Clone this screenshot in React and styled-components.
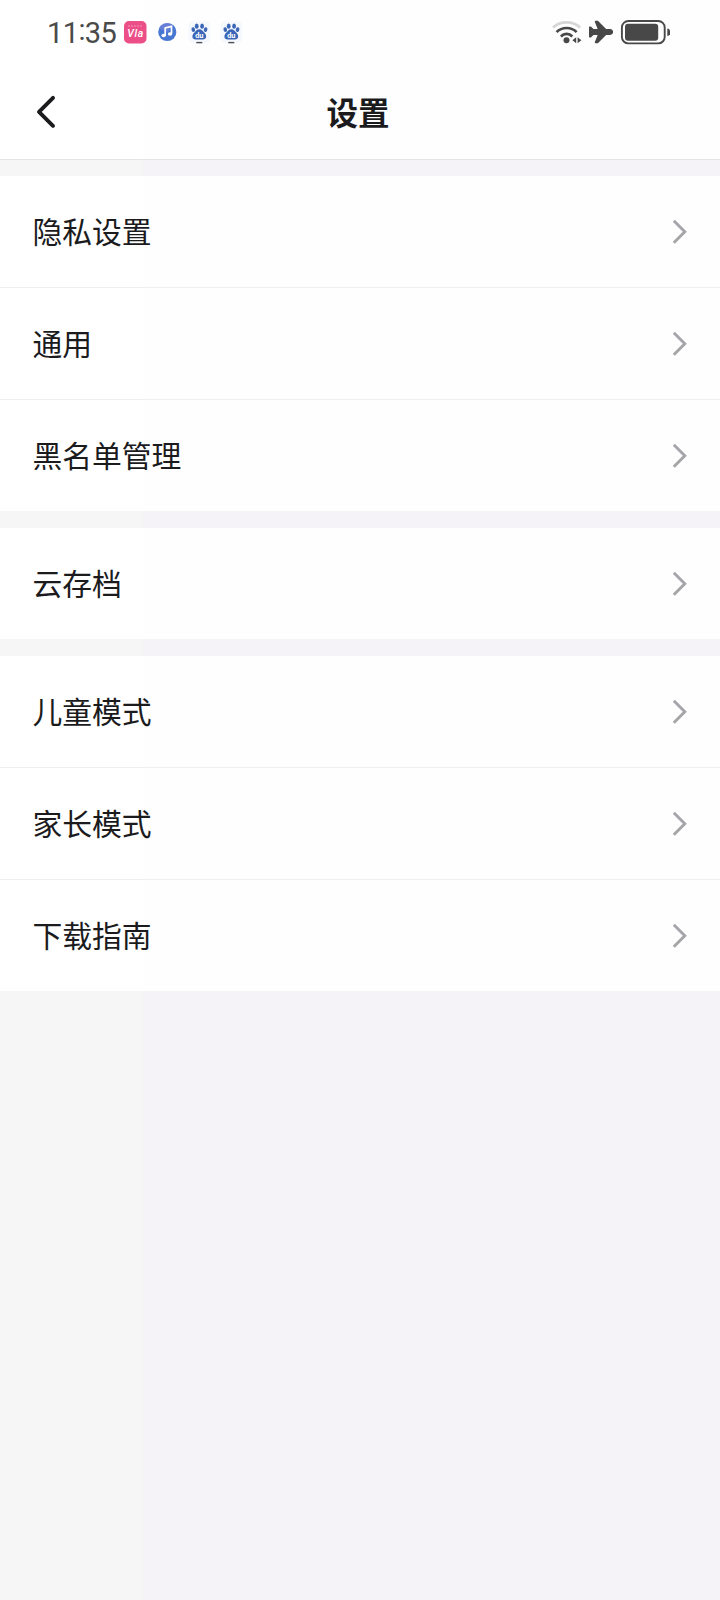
import React from 'react';
import styled, { createGlobalStyle } from 'styled-components';

const GlobalStyle = createGlobalStyle`
  * { box-sizing: border-box; }
  body {
    margin: 0;
    background: #f5f3f7;
  }
  svg { display: block; flex: none; }
`;

const surface = 'linear-gradient(90deg, #ffffff 143px, #fefefe 143px)';

const Screen = styled.div`
  width: 720px;
  height: 1600px;
  display: flex;
  flex-direction: column;
  overflow: hidden;
  background: linear-gradient(90deg, #f6f6f6 143px, #f5f3f7 143px);
  color: #1b1b1d;
  font-family: 'Noto Sans CJK SC', sans-serif;
`;

const StatusBar = styled.div`
  height: 64px;
  padding: 0 50px 0 47px;
  display: flex;
  align-items: center;
  justify-content: space-between;
  background: ${surface};
`;

const StatusGroup = styled.div`
  display: flex;
  align-items: center;
`;

const Clock = styled.div`
  width: 76px;
  padding-top: 1px;
  font: 400 29px/64px Roboto, sans-serif;
  letter-spacing: -0.6px;
  color: #4a4a4a;
`;

const Colon = styled.span`
  position: relative;
  top: -3px;
`;

const Header = styled.header`
  height: 96px;
  padding: 0 35px 0 31px;
  display: grid;
  grid-template-columns: 32px 1fr 32px;
  align-items: center;
  border-bottom: 1px solid #e4e3e6;
  background: ${surface};
`;

const BackButton = styled.button`
  border: 0;
  padding: 0;
  background: none;
`;

const Title = styled.h1`
  margin: 0;
  padding-bottom: 2px;
  font-size: 31.5px;
  line-height: 46px;
  font-weight: 700;
  text-align: center;
`;

const Sections = styled.main`
  padding-top: 16px;
  display: flex;
  flex-direction: column;
  gap: 17px;
`;

const Section = styled.section`
  background: ${surface};
`;

const Row = styled.div`
  height: 112px;
  padding: 0 32px 0 32.4px;
  display: flex;
  align-items: center;
  justify-content: space-between;
  border-bottom: 1px solid #f0eef1;

  &:last-child {
    height: 111px;
    border-bottom: 0;
  }
`;

const Label = styled.span`
  padding-bottom: 4px;
  font-size: 29.8px;
  line-height: 44px;
`;

const Chevron = () => (
  <svg width="16" height="26" viewBox="0 0 16 26" fill="none">
    <path d="M1.8 1.8 12.8 12.800 1.8 23.800" stroke="#a5a4a8" strokeWidth="2.900" />
  </svg>
);

const BackIcon = () => (
  <svg width="32" height="36" viewBox="0 0 32 36" fill="none">
    <path d="M22 3.8 8 17.8 22 31.8" stroke="#1b1b1d" strokeWidth="3.9" strokeLinecap="round" strokeLinejoin="round" />
  </svg>
);

const AppIcons = () => (
  <svg width="122" height="28" viewBox="0 0 122 28">
    <rect x="1" y="3" width="22.5" height="22.5" rx="5" fill="#ec4f87" />
    <path d="M5 8h14" stroke="#f27fa9" strokeWidth="1.6" strokeDasharray="2 1" />
    <text x="12.2" y="18.5" textAnchor="middle" fontFamily="Roboto, sans-serif" fontSize="10.5" fontStyle="italic" fontWeight="500" fill="#fff" textLength="16">Vla</text>

    <circle cx="44.3" cy="14" r="9.1" fill="#4878d2" />
    <path d="M36 10.5a9 9 0 0 1 14-3.4l-5 7z" fill="#7f83dc" opacity=".6" />
    <path d="M42.2 17.5V9.8l6.3-1.5v7.5" fill="none" stroke="#fff" strokeWidth="1.7" />
    <ellipse cx="40.7" cy="17.5" rx="2.2" ry="1.8" fill="#fff" />
    <ellipse cx="47" cy="16" rx="2.2" ry="1.8" fill="#fff" />

    {[76.3, 108.3].map((x) => (
      <g key={x} transform={`translate(${x} 0)`}>
        <rect x="-11" y="3" width="22" height="22" rx="5" fill="#f5f8fc" />
        <g fill="#3c67b9">
          <ellipse cx="-6" cy="11.6" rx="1.8" ry="2.4" transform="rotate(-12 -6 11.6)" />
          <ellipse cx="-2.6" cy="8.2" rx="1.9" ry="2.6" />
          <ellipse cx="2.8" cy="8.2" rx="1.9" ry="2.6" />
          <ellipse cx="6.3" cy="11.6" rx="1.8" ry="2.4" transform="rotate(12 6.3 11.6)" />
          <path d="M0 11.3c2.600 0 3.200 1.800 4.900 3.200 2.900 2.500 2.700 7-1.300 7h-7.200c-4 0-4.200-4.500-1.300-7C-3.200 13.100-2.600 11.300 0 11.300z" />
        </g>
        <text x="0" y="20.2" textAnchor="middle" fontFamily="Roboto, sans-serif" fontSize="7.4" fontWeight="700" fill="#fff">du</text>
        <path d="M-3 24.6h6" stroke="#4c4d56" strokeWidth="1.4" />
      </g>
    ))}
  </svg>
);

const SystemIcons = () => (
  <svg width="120" height="30" viewBox="0 0 120 30" fill="none">
    <path d="M3 10.7C9.7 3.6 23.3 3.6 30.2 10.7" stroke="#d6d6d6" strokeWidth="2.6" />
    <path d="M6.6 15.1c5.3-5.5 14.7-5.5 20 0M10.9 19.5c3.2-3.4 8.2-3.4 11.4 0" stroke="#484848" strokeWidth="2.7" />
    <circle cx="16.5" cy="23.3" r="3" fill="#484848" />
    <path d="M26.2 20.2v6l-3.8-3zM27.6 20.2v6l3.8-3z" fill="#484848" />
    <g fill="#484848" stroke="#484848" strokeWidth="1.6" strokeLinecap="round" strokeLinejoin="round">
      <path d="M45.600 4.600h2l8.200 8.300h4.200q2.300.3 2.300 2.100t-2.300 2.100h-4.200l-8.200 8.300h-2l3.300-8.300h-5.700l-2.600 2.700h-.8v-9.600h.8l2.600 2.700h5.700z" />
    </g>
    <rect x="71.9" y="4" width="42.8" height="22.4" rx="6.5" stroke="#484848" strokeWidth="1.9" />
    <rect x="75" y="6.8" width="33.2" height="16.9" rx="3" fill="#484848" />
    <path d="M117.3 11.500q3 .3 3 3.800t-3 3.800z" fill="#484848" />
  </svg>
);

const sections = [
  ['隐私设置', '通用', '黑名单管理'],
  ['云存档'],
  ['儿童模式', '家长模式', '下载指南'],
];

export default function App() {
  return (
    <Screen>
      <GlobalStyle />
      <StatusBar>
        <StatusGroup>
          <Clock>11<Colon>:</Colon>35</Clock>
          <AppIcons />
        </StatusGroup>
        <SystemIcons />
      </StatusBar>
      <Header>
        <BackButton aria-label="返回"><BackIcon /></BackButton>
        <Title>设置</Title>
      </Header>
      <Sections>
        {sections.map((rows) => (
          <Section key={rows[0]}>
            {rows.map((name) => (
              <Row key={name}>
                <Label>{name}</Label>
                <Chevron />
              </Row>
            ))}
          </Section>
        ))}
      </Sections>
    </Screen>
  );
}
